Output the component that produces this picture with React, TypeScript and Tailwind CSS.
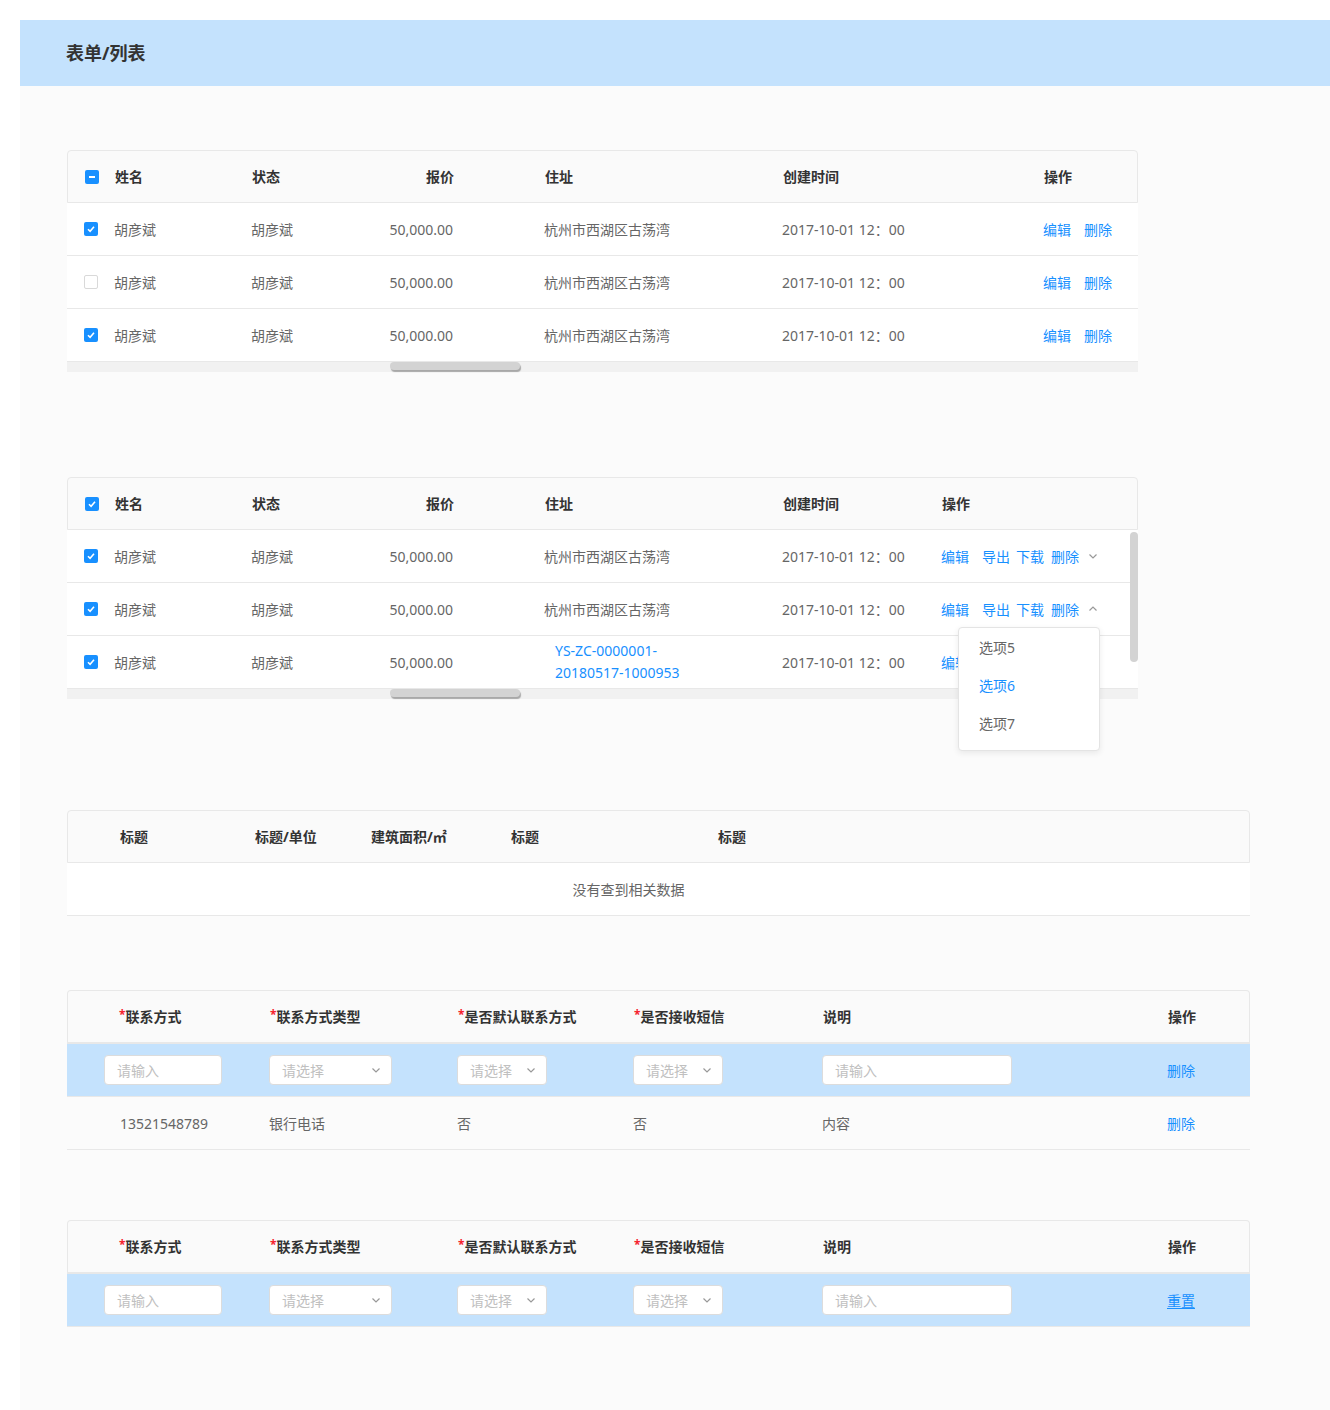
import React from 'react';

type CheckState = 'on' | 'off' | 'half';

const Checkbox: React.FC<{ state: CheckState }> = ({ state }) => {
  if (state === 'off') {
    return <span className="inline-block w-[14px] h-[14px] rounded-[2px] border border-[#d9d9d9] bg-white shrink-0" />;
  }
  return (
    <span className="inline-flex items-center justify-center w-[14px] h-[14px] rounded-[2px] bg-[#1890ff] shrink-0">
      {state === 'on' ? (
        <svg width="10" height="10" viewBox="0 0 10 10">
          <path d="M2 5.2 L4.1 7.3 L8 2.8" fill="none" stroke="#fff" strokeWidth="1.6" />
        </svg>
      ) : (
        <span className="block w-[6px] h-[2px] bg-white" />
      )}
    </span>
  );
};

const Chevron: React.FC<{ up?: boolean; className?: string }> = ({ up, className }) => (
  <svg width="10" height="10" viewBox="0 0 10 10" className={className}>
    <path d={up ? 'M1.5 6.5 L5 3 L8.5 6.5' : 'M1.5 3.5 L5 7 L8.5 3.5'} fill="none" stroke="#999" strokeWidth="1.2" />
  </svg>
);

const HScroll: React.FC = () => (
  <div className="relative h-[10px] bg-[#f1f1f1]">
    <div className="absolute left-[323px] top-0 w-[130px] h-[8px] rounded-full bg-[#d3d3d3] shadow-[1px_2px_1px_#a8a8a8]" />
  </div>
);

const TextInput: React.FC<{ w: string }> = ({ w }) => (
  <div className={`${w} h-[30px] flex items-center px-[12px] bg-white border border-[#dcdcdc] rounded-[4px] text-[14px] text-[#c0c0c0]`}>
    请输入
  </div>
);

const SelectBox: React.FC<{ w: string }> = ({ w }) => (
  <div className={`${w} h-[30px] flex items-center justify-between pl-[12px] pr-[10px] bg-white border border-[#dcdcdc] rounded-[4px] text-[14px] text-[#c0c0c0]`}>
    <span>请选择</span>
    <Chevron />
  </div>
);

const Req: React.FC<{ label: string }> = ({ label }) => (
  <span>
    <span className="text-[#f5222d] text-[12px] align-top">*</span>
    {label}
  </span>
);

const rows1: CheckState[] = ['on', 'off', 'on'];

function TableOne() {
  return (
    <div className="w-[1071px] text-[14px]">
      <div className="flex items-center h-[53px] bg-[#fafafa] border border-[#e8e8e8] rounded-t-[4px] font-bold text-[#333]">
        <div className="w-[184px] flex items-center gap-[16px] pl-[17px]">
          <Checkbox state="half" />
          <span>姓名</span>
        </div>
        <div className="w-[120px]">状态</div>
        <div className="w-[173px] text-right pr-[91px]">报价</div>
        <div className="w-[238px]">住址</div>
        <div className="w-[261px]">创建时间</div>
        <div className="flex-1">操作</div>
      </div>
      {rows1.map((s, i) => (
        <div key={i} className="flex items-center h-[53px] bg-white border-b border-[#e8e8e8] text-[#666]">
          <div className="w-[184px] flex items-center gap-[16px] pl-[17px]">
            <Checkbox state={s} />
            <span>胡彦斌</span>
          </div>
          <div className="w-[120px]">胡彦斌</div>
          <div className="w-[173px] text-right pr-[91px]">50,000.00</div>
          <div className="w-[238px]">杭州市西湖区古荡湾</div>
          <div className="w-[261px]">2017-10-01 12：00</div>
          <div className="flex-1 flex gap-[13px] text-[#1890ff]">
            <span>编辑</span>
            <span>删除</span>
          </div>
        </div>
      ))}
      <HScroll />
    </div>
  );
}

const Actions2: React.FC<{ open?: boolean }> = ({ open }) => (
  <div className="relative flex-1 flex items-center text-[#1890ff]">
    <span>编辑</span>
    <span className="ml-[13px]">导出</span>
    <span className="ml-[6px]">下载</span>
    <span className="ml-[7px]">删除</span>
    <Chevron up={open} className="ml-[9px]" />
    {open && (
      <div className="absolute left-[17px] top-[28px] z-10 w-[142px] h-[124px] pt-[1px] bg-white border border-[#e4e4e4] rounded-[4px] shadow-[0_2px_6px_rgba(0,0,0,0.08)] text-[#666]">
        <div className="h-[38px] flex items-center pl-[20px]">选项5</div>
        <div className="h-[38px] flex items-center pl-[20px] text-[#1890ff]">选项6</div>
        <div className="h-[38px] flex items-center pl-[20px]">选项7</div>
      </div>
    )}
  </div>
);

function TableTwo() {
  return (
    <div className="relative w-[1071px] text-[14px]">
      <div className="flex items-center h-[53px] bg-[#fafafa] border border-[#e8e8e8] rounded-t-[4px] font-bold text-[#333]">
        <div className="w-[184px] flex items-center gap-[16px] pl-[17px]">
          <Checkbox state="on" />
          <span>姓名</span>
        </div>
        <div className="w-[120px]">状态</div>
        <div className="w-[173px] text-right pr-[91px]">报价</div>
        <div className="w-[238px]">住址</div>
        <div className="w-[159px]">创建时间</div>
        <div className="flex-1">操作</div>
      </div>
      {[0, 1, 2].map((i) => (
        <div key={i} className="flex items-center h-[53px] bg-white border-b border-[#e8e8e8] text-[#666]">
          <div className="w-[184px] flex items-center gap-[16px] pl-[17px]">
            <Checkbox state="on" />
            <span>胡彦斌</span>
          </div>
          <div className="w-[120px]">胡彦斌</div>
          <div className="w-[173px] text-right pr-[91px]">50,000.00</div>
          {i < 2 ? (
            <div className="w-[238px]">杭州市西湖区古荡湾</div>
          ) : (
            <div className="w-[238px] pl-[11px] leading-[22px] text-[#1890ff]">
              YS-ZC-0000001-
              <br />
              20180517-1000953
            </div>
          )}
          <div className="w-[159px]">2017-10-01 12：00</div>
          {i === 2 ? (
            <div className="flex-1 text-[#1890ff]">编辑</div>
          ) : (
            <Actions2 open={i === 1} />
          )}
        </div>
      ))}
      <HScroll />
      <div className="absolute right-0 top-[55px] w-[8px] h-[130px] rounded-full bg-[#d3d3d3]" />
    </div>
  );
}

function TableThree() {
  return (
    <div className="w-[1183px] text-[14px]">
      <div className="flex items-center h-[53px] bg-[#fafafa] border border-[#e8e8e8] rounded-t-[4px] font-bold text-[#333]">
        <div className="w-[187px] pl-[52px]">标题</div>
        <div className="w-[116px]">标题/单位</div>
        <div className="w-[140px]">建筑面积/㎡</div>
        <div className="w-[207px]">标题</div>
        <div className="flex-1">标题</div>
      </div>
      <div className="h-[53px] flex items-center justify-center pr-[60px] bg-white border-b border-[#e8e8e8] text-[#666]">
        没有查到相关数据
      </div>
    </div>
  );
}

const ContactHeader: React.FC = () => (
  <div className="flex items-center h-[54px] bg-[#fafafa] border border-b-2 border-[#e8e8e8] rounded-t-[4px] font-bold text-[#333]">
    <div className="w-[202px] pl-[51px]">
      <Req label="联系方式" />
    </div>
    <div className="w-[188px]">
      <Req label="联系方式类型" />
    </div>
    <div className="w-[176px]">
      <Req label="是否默认联系方式" />
    </div>
    <div className="w-[189px]">
      <Req label="是否接收短信" />
    </div>
    <div className="w-[345px]">说明</div>
    <div className="flex-1">操作</div>
  </div>
);

const EditRow: React.FC<{ action: string; underline?: boolean }> = ({ action, underline }) => (
  <div className="flex items-center h-[53px] bg-[#c4e2fd] border-b border-[#e8e8e8]">
    <div className="w-[202px] pl-[37px]">
      <TextInput w="w-[118px]" />
    </div>
    <div className="w-[188px]">
      <SelectBox w="w-[123px]" />
    </div>
    <div className="w-[176px]">
      <SelectBox w="w-[90px]" />
    </div>
    <div className="w-[189px]">
      <SelectBox w="w-[90px]" />
    </div>
    <div className="w-[345px]">
      <TextInput w="w-[190px]" />
    </div>
    <div className={`flex-1 text-[#1890ff] ${underline ? 'underline underline-offset-2' : ''}`}>{action}</div>
  </div>
);

function TableFour() {
  return (
    <div className="w-[1183px] text-[14px]">
      <ContactHeader />
      <EditRow action="删除" />
      <div className="flex items-center h-[53px] bg-[#fbfbfb] border-b border-[#e8e8e8] text-[#666]">
        <div className="w-[202px] pl-[53px]">13521548789</div>
        <div className="w-[188px]">银行电话</div>
        <div className="w-[176px]">否</div>
        <div className="w-[189px]">否</div>
        <div className="w-[345px]">内容</div>
        <div className="flex-1 text-[#1890ff]">删除</div>
      </div>
    </div>
  );
}

function TableFive() {
  return (
    <div className="w-[1183px] text-[14px]">
      <ContactHeader />
      <EditRow action="重置" underline />
    </div>
  );
}

export default function App() {
  return (
    <div className="bg-white pl-[20px] pt-[20px] font-['Noto_Sans','Noto_Sans_CJK_SC',sans-serif]">
      <div className="min-h-[1390px] bg-[#fbfbfb]">
        <div className="h-[66px] flex items-center pl-[46px] bg-[#c4e2fd] text-[18px] font-bold text-[#333]">
          表单/列表
        </div>
        <div className="flex flex-col pl-[47px] pt-[64px]">
          <TableOne />
          <div className="mt-[105px]">
            <TableTwo />
          </div>
          <div className="mt-[111px]">
            <TableThree />
          </div>
          <div className="mt-[74px]">
            <TableFour />
          </div>
          <div className="mt-[70px]">
            <TableFive />
          </div>
        </div>
      </div>
    </div>
  );
}
